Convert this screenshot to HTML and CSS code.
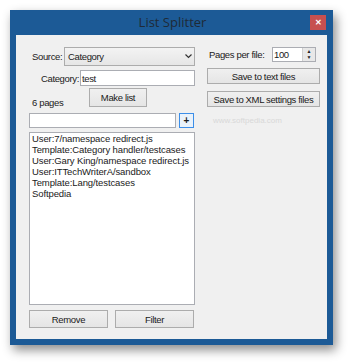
FILE: index.html
```html
<!DOCTYPE html>
<html>
<head>
<meta charset="utf-8">
<link rel="stylesheet" href="styles.css">
</head>
<body>
<div class="window">
  <div class="titlebar">
    <span class="title">List Splitter</span>
    <span class="close">&#x2715;</span>
  </div>
  <div class="client">
    <div class="leftcol">
      <div class="row row-source">
        <span class="lbl lbl-source">Source:</span>
        <div class="combo"><span>Category</span><svg class="chev" width="7" height="5" viewBox="0 0 7 5"><path d="M0.5 0.5 L3.5 3.5 L6.5 0.5" fill="none" stroke="#333" stroke-width="1.2"/></svg></div>
      </div>
      <div class="row row-cat">
        <span class="lbl lbl-cat">Category:</span>
        <div class="textbox cat-box">test</div>
      </div>
      <div class="row row-make">
        <span class="lbl lbl-pages">6 pages</span>
        <div class="btn btn-make">Make list</div>
      </div>
      <div class="row row-filter">
        <div class="textbox filter-box"></div>
        <div class="btn btn-plus">+</div>
      </div>
      <div class="listbox">
        <div>User:7/namespace redirect.js</div>
        <div>Template:Category handler/testcases</div>
        <div>User:Gary King/namespace redirect.js</div>
        <div>User:ITTechWriterA/sandbox</div>
        <div>Template:Lang/testcases</div>
        <div>Softpedia</div>
      </div>
      <div class="row row-bottom">
        <div class="btn btn-bottom">Remove</div>
        <div class="btn btn-bottom">Filter</div>
      </div>
    </div>
    <div class="rightcol">
      <div class="row row-ppf">
        <span class="lbl lbl-ppf">Pages per file:</span>
        <div class="numeric"><span class="numval">100</span><div class="spin"><div class="spinbtn">&#x25B2;</div><div class="spinbtn">&#x25BC;</div></div></div>
      </div>
      <div class="btn btn-right btn-text">Save to text files</div>
      <div class="btn btn-right btn-xml">Save to XML settings files</div>
      <div class="wm-small">www.softpedia.com</div>
    </div>
  </div>
</div>
</body>
</html>
```

FILE: styles.css
```css
html, body {
  margin: 0;
  padding: 0;
  background: #ffffff;
  width: 350px;
  height: 362px;
  overflow: hidden;
}
body {
  font-family: "Liberation Sans", Arial, sans-serif;
  font-size: 9.5px;
  letter-spacing: -0.35px;
  color: #1a1a1a;
}
.window {
  margin: 10px 0 0 10px;
  width: 323px;
  height: 335px;
  background: #1c5a96;
  box-sizing: border-box;
  padding: 0 6px 6px 6px;
  display: flex;
  flex-direction: column;
  box-shadow: 3px 5px 10px rgba(0, 0, 0, 0.45);
}
.titlebar {
  height: 25px;
  flex: none;
  position: relative;
  display: flex;
  align-items: center;
  justify-content: center;
}
.title {
  font-family: "Open Sans", "Liberation Sans", sans-serif;
  font-size: 13px;
  letter-spacing: 0;
  color: #1f2a36;
  margin-top: -2px;
  margin-left: 2px;
}
.close {
  position: absolute;
  right: 1px;
  top: 5px;
  width: 16px;
  height: 15px;
  background: #c75050;
  color: #ffffff;
  font-size: 8px;
  letter-spacing: 0;
  font-weight: bold;
  display: flex;
  align-items: center;
  justify-content: center;
}
.client {
  flex: 1;
  background: #f0f0f0;
  display: grid;
  grid-template-columns: 166px 113px;
  column-gap: 12px;
  padding: 12px 0 0 13px;
  align-items: start;
}
.leftcol, .rightcol {
  display: flex;
  flex-direction: column;
}
.row {
  display: flex;
  align-items: center;
}
.lbl {
  white-space: nowrap;
  box-sizing: border-box;
  flex: none;
}
.row-source {
  height: 19px;
}
.lbl-source {
  padding-left: 3px;
  width: 35px;
}
.combo {
  width: 131px;
  height: 19px;
  box-sizing: border-box;
  border: 1px solid #acacac;
  background: linear-gradient(#f3f3f3, #e6e6e6);
  display: flex;
  align-items: center;
  justify-content: space-between;
  padding: 0 2px 0 3px;
}
.row-cat {
  height: 16px;
  margin-top: 4px;
}
.lbl-cat {
  width: 51px;
  text-align: right;
  padding-right: 1px;
}
.textbox {
  background: #ffffff;
  border: 1px solid #abadb3;
  box-sizing: border-box;
  display: flex;
  align-items: center;
  padding-left: 1px;
}
.cat-box {
  width: 115px;
  height: 16px;
}
.row-make {
  height: 19px;
  margin-top: 2px;
}
.lbl-pages {
  padding-left: 3px;
  width: 60px;
  margin-top: 9px;
}
.btn {
  box-sizing: border-box;
  border: 1px solid #acacac;
  background: linear-gradient(#f0f0f0, #e5e5e5);
  display: flex;
  align-items: center;
  justify-content: center;
  white-space: nowrap;
}
.btn-make {
  width: 58px;
  height: 19px;
}
.row-filter {
  height: 15px;
  margin-top: 6px;
}
.filter-box {
  width: 147px;
  height: 15px;
}
.btn-plus {
  width: 15px;
  height: 15px;
  margin-left: 3px;
  border-color: #3c8ee8;
  background: #e9f2fb;
  font-size: 10px;
  font-weight: bold;
  letter-spacing: 0;
}
.listbox {
  margin-top: 4px;
  height: 173px;
  background: #ffffff;
  border: 1px solid #abadb3;
  box-sizing: border-box;
  padding: 0 0 0 2px;
  line-height: 11px;
  letter-spacing: -0.1px;
  white-space: nowrap;
  overflow: hidden;
}
.row-bottom {
  margin-top: 5px;
  height: 18px;
  gap: 7px;
}
.btn-bottom {
  width: 79px;
  height: 18px;
}
.row-ppf {
  height: 14px;
}
.lbl-ppf {
  padding-left: 2px;
  width: 65px;
}
.numeric {
  width: 44px;
  height: 15px;
  box-sizing: border-box;
  border: 1px solid #abadb3;
  background: #ffffff;
  display: flex;
  align-items: center;
  justify-content: space-between;
  flex: none;
}
.numval {
  padding-left: 1px;
}
.spin {
  width: 12px;
  height: 13px;
  display: flex;
  flex-direction: column;
  border-left: 1px solid #d0d0d0;
}
.spinbtn {
  flex: 1;
  font-size: 5px;
  line-height: 6px;
  letter-spacing: 0;
  text-align: center;
  background: #e8e8e8;
  color: #222;
}
.btn-right {
  width: 113px;
  height: 16px;
}
.btn-text {
  margin-top: 7px;
}
.btn-xml {
  margin-top: 7px;
}
.wm-small {
  margin: 9px 0 0 6px;
  font-size: 8px;
  line-height: 9px;
  letter-spacing: 0;
  color: #d8d8d8;
  white-space: nowrap;
}
```
